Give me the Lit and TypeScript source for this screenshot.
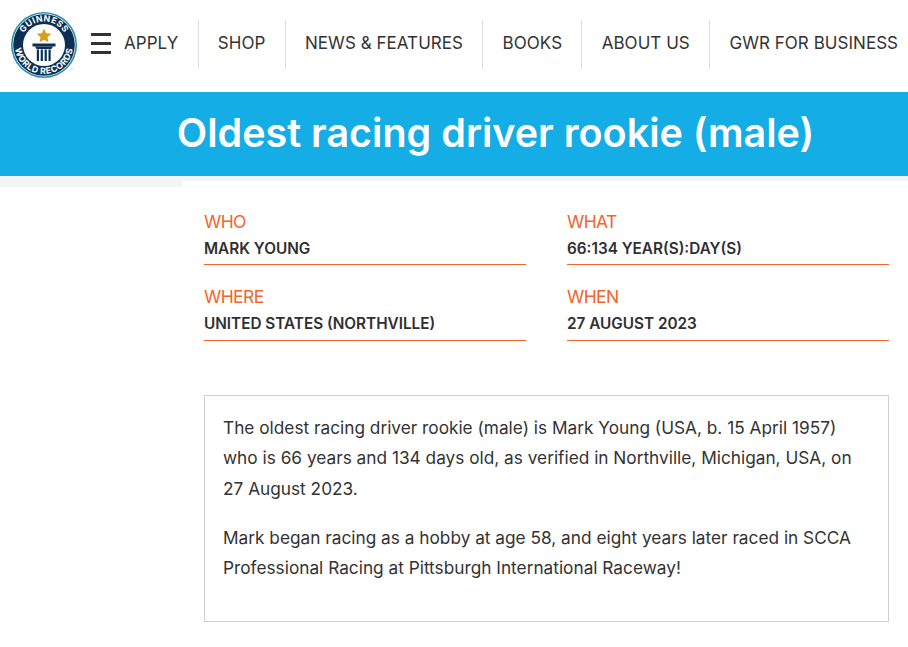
import { LitElement, html, css } from "lit";
import { customElement } from "lit/decorators.js";

@customElement("app-root")
export class AppRoot extends LitElement {
  static styles = css`
    :host { display: block; width: 908px; height: 647px; overflow: hidden; background: #fff; font-family: Inter, "Noto Sans", sans-serif; color: #2f2f2f; }
    header { display: flex; align-items: flex-start; height: 92px; box-sizing: border-box; padding: 12px 0 0 11px; white-space: nowrap; }
    .logo { width: 67px; height: 67px; flex: none; }
    .burger { flex: none; width: 20px; height: 21px; margin: 21px 0 0 13px; display: flex; flex-direction: column; justify-content: space-between; }
    .burger i { display: block; height: 3px; background: #333; }
    nav { display: flex; margin: 8px 0 0 13px; }
    nav a { display: block; height: 49px; line-height: 46px; padding: 0 19.3px; border-left: 1px solid #ddd; font-size: 17px; letter-spacing: .04px; color: #333; }
    nav a:first-child { border-left: 0; padding-left: 0; }
    .banner { height: 84px; background: #14ade6; display: flex; align-items: center; justify-content: center; }
    .banner h1 { margin: 0 0 2px 83px; font-size: 39.5px; font-weight: 600; color: #fff; white-space: nowrap; }
    .strip { height: 5px; background: #f4f4f4; }
    .body { display: flex; }
    .side { width: 182px; height: 6px; background: #f4f4f4; flex: none; }
    main { width: 685px; margin-left: 22px; padding-top: 28.6px; }
    .facts { display: grid; grid-template-columns: 322px 322px; column-gap: 41px; row-gap: 20px; }
    .fact { height: 54.6px; border-bottom: 1px solid #f4632a; }
    .fact .k { font-size: 17.5px; line-height: 24px; color: #f4632a; letter-spacing: -.6px; }
    .fact .v { font-size: 15.3px; font-weight: 600; line-height: 20px; margin-top: 5px; color: #2f2f2f; }
    .box { margin-top: 54px; width: 685px; height: 227px; box-sizing: border-box; border: 1px solid #cfcfcf; padding: 17px 18px; font-size: 17.25px; line-height: 30.4px; color: #333; }
    .box p { margin: 0 0 19px; }
  `;
  render() {
    const nav = ["APPLY", "SHOP", "NEWS & FEATURES", "BOOKS", "ABOUT US", "GWR FOR BUSINESS"];
    const facts = [
      ["WHO", "MARK YOUNG"],
      ["WHAT", "66:134 YEAR(S):DAY(S)"],
      ["WHERE", "UNITED STATES (NORTHVILLE)"],
      ["WHEN", "27 AUGUST 2023"],
    ];
    return html`
      <header>
        <svg class="logo" viewBox="0 0 67 67" aria-label="Guinness World Records">
          <defs>
            <path id="arcT" d="M9.5 33a23.5 23.5 0 0 1 47 0" />
            <path id="arcB" d="M4 33a29 29 0 0 0 58 0" />
          </defs>
          <circle cx="33" cy="33" r="33" fill="#2a8fb0" />
          <circle cx="33" cy="33" r="31.4" fill="#fff" />
          <circle cx="33" cy="33" r="30.8" fill="#0d2f52" />
          <circle cx="33" cy="33" r="21" fill="#fff" />
          <text font-family="Inter, sans-serif" font-size="8.6" font-weight="700" fill="#fff" text-anchor="middle" letter-spacing=".5"><textPath href="#arcT" startOffset="50%">GUINNESS</textPath></text>
          <text font-family="Inter, sans-serif" font-size="8.8" font-weight="700" fill="#fff" text-anchor="middle" letter-spacing=".5"><textPath href="#arcB" startOffset="50%">WORLD RECORDS</textPath></text>
          <path d="M33 16.5l2.2 4.7 5.1.6-3.8 3.5 1 5-4.5-2.5-4.5 2.5 1-5-3.8-3.5 5.1-.6z" fill="#d69e1c" />
          <rect x="21.5" y="31.5" width="23" height="3" fill="#0d2f52" />
          <path d="M24 34.5h18l-1.6 2.5H25.6z" fill="#0d2f52" />
          <path d="M25.8 37.5h2.2v11.5h-2.2zM29.7 37.5h2.2v11.5h-2.2zM33.6 37.5h2.2v11.5h-2.2zM37.5 37.5h2.2v11.5h-2.2z" fill="#0d2f52" />
          <text x="60" y="59" font-family="Inter, sans-serif" font-size="3" fill="#666">™</text>
        </svg>
        <div class="burger"><i></i><i></i><i></i></div>
        <nav>${nav.map((n) => html`<a>${n}</a>`)}</nav>
      </header>
      <div class="banner"><h1>Oldest racing driver rookie (male)</h1></div>
      <div class="strip"></div>
      <div class="body">
        <div class="side"></div>
        <main>
          <div class="facts">
            ${facts.map(([k, v]) => html`<div class="fact"><div class="k">${k}</div><div class="v">${v}</div></div>`)}
          </div>
          <div class="box">
            <p>The oldest racing driver rookie (male) is Mark Young (USA, b. 15 April 1957) who is 66 years and 134 days old, as verified in Northville, Michigan, USA, on 27 August 2023.</p>
            <p>Mark began racing as a hobby at age 58, and eight years later raced in SCCA Professional Racing at Pittsburgh International Raceway!</p>
          </div>
        </main>
      </div>
    `;
  }
}
